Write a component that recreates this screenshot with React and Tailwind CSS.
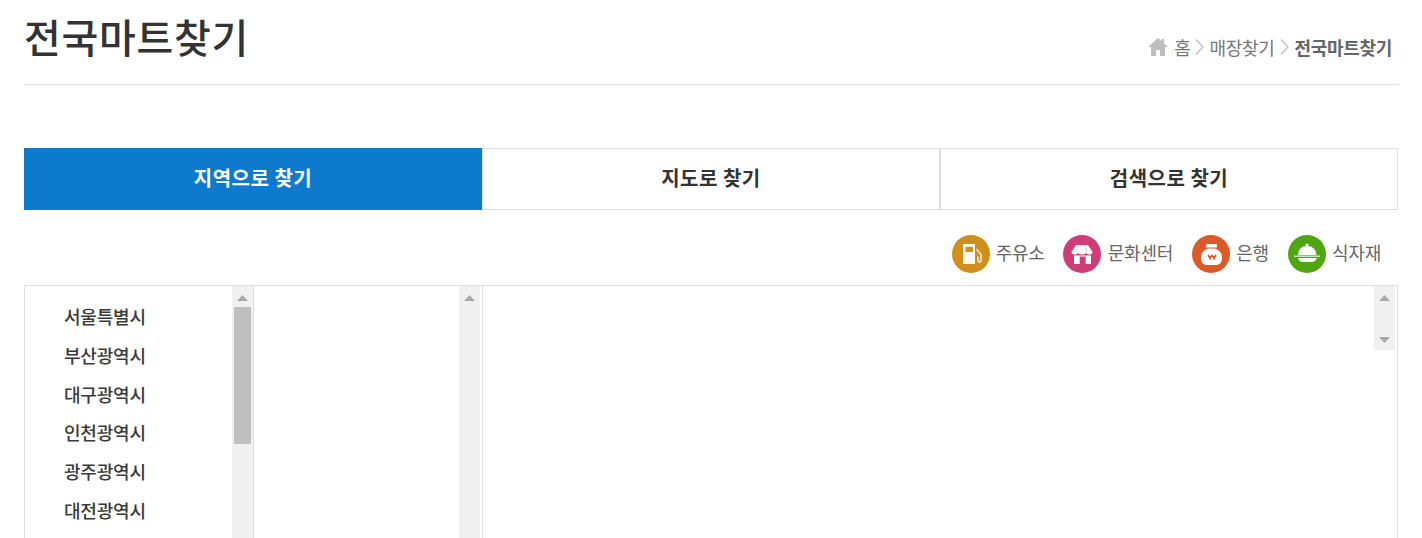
const FONT = "font-['Noto_Sans_CJK_KR','Noto_Sans',sans-serif]";

const cities = ['서울특별시', '부산광역시', '대구광역시', '인천광역시', '광주광역시', '대전광역시'];

const UpArrow = () => (
  <svg width="11" height="6" viewBox="0 0 11 6" className="block">
    <polygon points="5.5,0 11,6 0,6" fill="#a8a8a8" />
  </svg>
);

const DownArrow = () => (
  <svg width="11" height="6" viewBox="0 0 11 6" className="block">
    <polygon points="0,0 11,0 5.5,6" fill="#a8a8a8" />
  </svg>
);

const HomeIcon = () => (
  <svg width="20" height="18" viewBox="0 0 20 18" className="block">
    <path d="M10 0 L13.5 3.1 V1 H16 V5.3 L20 9 H17 V18 H12 V12 H8 V18 H3 V9 H0 Z" fill="#bdbdbd" />
  </svg>
);

const Chevron = () => (
  <svg width="9" height="16" viewBox="0 0 9 16" className="block">
    <path d="M1 0.5 L8 8 L1 15.5" fill="none" stroke="#bdbdbd" strokeWidth="1.2" />
  </svg>
);

const GasIcon = () => (
  <svg width="38" height="38" viewBox="0 0 38 38" className="block">
    <circle cx="19" cy="19" r="19" fill="#d08e1a" />
    <path fillRule="evenodd" d="M11 9 H23 V29 H11 Z M13.5 12 V17 H21 V12 Z" fill="#ffffff" fillOpacity="0.95" />
    <path d="M24.5 14 L29 19.5 V24.5 Q29 27 27.5 27 Q26 27 26 24.5 V21.5" fill="none" stroke="#f3dfb5" strokeWidth="1.8" />
  </svg>
);

const ShopIcon = () => (
  <svg width="38" height="38" viewBox="0 0 38 38" className="block">
    <circle cx="19" cy="19" r="19" fill="#d03c78" />
    <path d="M13 10 H25 L29.5 17 Q29.5 19.5 26.5 19.5 Q24 19.5 23 18 Q21.5 19.5 19 19.5 Q16.5 19.5 15 18 Q14 19.5 11.5 19.5 Q8.5 19.5 8.5 17 Z" fill="#ffffff" />
    <path d="M11 20.5 H28 V29 H22.7 V21.5 H16.7 V29 H11 Z" fill="#ffffff" />
    <path d="M16 11 L14 17 M22 11 L24 17" stroke="#f4c6d9" strokeWidth="1" />
  </svg>
);

const BankIcon = () => (
  <svg width="38" height="38" viewBox="0 0 38 38" className="block">
    <circle cx="19" cy="19" r="19" fill="#dd5a26" />
    <rect x="14" y="9" width="11" height="3.5" rx="1" fill="#ffffff" />
    <path d="M16 13.5 H23 Q30 16 30 23 Q30 30 24 30 H15 Q9 30 9 23 Q9 16 16 13.5 Z" fill="#ffffff" />
    <path d="M16 19.5 L18 24 L20 20 L22 24 L24 19.5 M15.8 21.3 H24.2" fill="none" stroke="#dd5a26" strokeWidth="1.2" />
  </svg>
);

const DishIcon = () => (
  <svg width="38" height="38" viewBox="0 0 38 38" className="block">
    <circle cx="19" cy="19" r="19" fill="#50a612" />
    <circle cx="19" cy="10" r="1.6" fill="#ffffff" />
    <path d="M10 20 Q10.5 11 19 11 Q27.5 11 28.5 20 Z" fill="#ffffff" />
    <rect x="6" y="20.5" width="26" height="1.5" fill="#c9e5b0" />
    <path d="M10 23 H29 Q27.5 27 23 27 H15 Q11 27 10 23 Z" fill="#ffffff" />
  </svg>
);

const legend = [
  { label: '주유소', Icon: GasIcon, cls: 'gap-[6px]' },
  { label: '문화센터', Icon: ShopIcon, cls: 'gap-[7px] mr-[1px]' },
  { label: '은행', Icon: BankIcon, cls: 'gap-[6px] mr-[1px]' },
  { label: '식자재', Icon: DishIcon, cls: 'gap-[6px]' },
];

const App = () => {
  return (
    <div className={`h-[538px] overflow-hidden bg-white text-[#333333] pl-[24px] pr-[23px] ${FONT}`}>
      {/* HEADER */}
      <div className="flex h-[85px] items-start justify-between border-b border-[#dddddd]">
        <h1 className="mt-[8px] text-[40px] leading-[56px] font-medium tracking-[0.7px] text-[#333333]">전국마트찾기</h1>
        <div className="mt-[35px] mr-[7px] flex items-center text-[18px] leading-[24px] tracking-[-0.3px] text-[#777777]">
          <HomeIcon />
          <span className="ml-[6px]">홈</span>
          <span className="mx-[5px]"><Chevron /></span>
          <span>매장찾기</span>
          <span className="ml-[6px] mr-[5px]"><Chevron /></span>
          <span className="font-bold text-[#666666]">전국마트찾기</span>
        </div>
      </div>

      {/* TABS */}
      <div className="mt-[63px] mr-[1px] flex h-[62px] text-[20px] font-bold tracking-[0.5px]">
        <div className="flex w-[458px] items-center justify-center bg-[#0e7acd] pb-[2px] text-white">지역으로 찾기</div>
        <div className="flex w-[458px] items-center justify-center border border-[#dddddd] pb-[2px]">지도로 찾기</div>
        <div className="flex flex-1 items-center justify-center border border-[#dddddd] pb-[2px]">검색으로 찾기</div>
      </div>

      {/* LEGEND */}
      <div className="mt-[25px] mr-[18px] flex h-[38px] items-center justify-end gap-[18px] text-[18px] tracking-[-0.2px] text-[#666666]">
        {legend.map(({ label, Icon, cls }) => (
          <div key={label} className={`flex items-center ${cls}`}>
            <Icon />
            <span className="pb-[3px]">{label}</span>
          </div>
        ))}
      </div>

      {/* PANELS */}
      <div className="mt-[12px] mr-[1px] flex h-[300px] border border-[#dddddd]">
        <div className="flex w-[229px] border-r border-[#dddddd]">
          <ul className="flex-1 pt-[11px] pl-[39px] text-[18px] font-medium leading-[38.8px] tracking-[-0.2px] text-[#3a3a3a]">
            {cities.map((city) => (
              <li key={city}>{city}</li>
            ))}
          </ul>
          <div className="flex w-[21px] flex-col items-center bg-[#f0f0f0] pt-[9px]">
            <UpArrow />
            <div className="mt-[6px] h-[137px] w-[17px] bg-[#bfbfbf]" />
          </div>
        </div>
        <div className="flex w-[228px] justify-end pr-[2px]">
          <div className="flex w-[21px] flex-col items-center bg-[#f0f0f0] pt-[9px]">
            <UpArrow />
          </div>
        </div>
        <div className="flex flex-1 justify-end border-l border-[#dddddd] pr-[2px]">
          <div className="flex h-[64px] w-[21px] flex-col items-center justify-between bg-[#f0f0f0] pt-[9px] pb-[7px]">
            <UpArrow />
            <DownArrow />
          </div>
        </div>
      </div>
    </div>
  );
};

export default App;
